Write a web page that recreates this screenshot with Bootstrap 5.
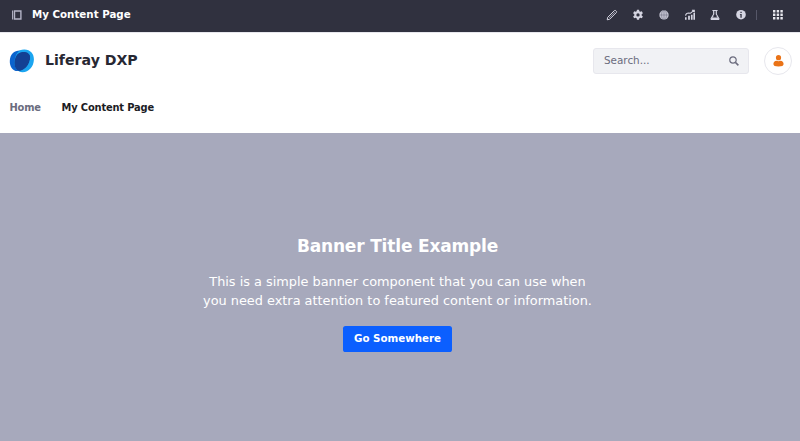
<!DOCTYPE html>
<html lang="en">
<head>
<meta charset="utf-8">
<meta name="viewport" content="width=device-width, initial-scale=1">
<title>My Content Page - Liferay DXP</title>
<link href="https://cdn.jsdelivr.net/npm/bootstrap@5.3.0/dist/css/bootstrap.min.css" rel="stylesheet">
<style>
body{font-family:"DejaVu Sans",sans-serif;font-size:10.29px;color:#272833;height:441px;overflow:hidden}
svg{display:block;flex:none}
.control-bar{height:32px;background:#30313f;color:#d5d5e2;padding:0 17px 3px 12px}
.control-title{font-size:10.29px;color:#fff;margin-left:10px}
.tools{gap:13.7px}
.divider{width:1px;height:10px;background:#565768;margin:0 2px 0 -4.3px}
.site-header{height:57px;padding:0 8px 1px 9px;border-top:1px solid #e7e7ed}
.brand-name{font-size:14.14px;color:#272833;margin-left:11px;padding-top:1px}
.search-box{width:156px;height:26px;background:#f1f2f5;border:1px solid #e7e7ed;border-radius:3px;padding:0 9px 0 10px;color:#6b6c7e;margin-right:15px}
.search-box input{font-size:10.4px;color:#6b6c7e;min-width:0}
.search-box input::placeholder{color:#6b6c7e;opacity:1}
.avatar{width:28px;height:28px;border:1px solid #e7e7ed}
.site-nav{height:44px;padding:11px 9.5px 0;gap:20.7px;font-size:9.9px;letter-spacing:-.16px;line-height:15px}
.site-nav a{color:#6b6c7e;text-decoration:none}
.site-nav a.active{color:#1c1c24}
.banner{background:#a7a9bc;height:308px;padding-top:102px;padding-right:5px;color:#fff}
.banner h1{font-size:17px;letter-spacing:-.17px;line-height:22px;margin:0 0 15px}
.banner p{font-size:12.86px;line-height:19.29px;width:400px;margin:0 0 15.5px}
.btn-go{background:#0b5fff;color:#fff;font-size:10.29px;line-height:15px;padding:5px 10.5px 6px;border:0;border-radius:2.6px}
</style>
<script src="https://cdn.jsdelivr.net/npm/bootstrap@5.3.0/dist/js/bootstrap.bundle.min.js"></script>
</head>
<body class="bg-white">
<div class="control-bar d-flex align-items-center">
  <svg width="10" height="10" viewBox="0 0 10 10" fill="none" stroke="#b4b4c6"><path d="M.6 .5v9" stroke-width="1.1"/><path d="M2.5 1h6.400v8H2.500z" stroke-width="1.400"/></svg>
  <span class="control-title fw-bold">My Content Page</span>
  <div class="tools d-flex align-items-center ms-auto">
    <svg width="12" height="12" viewBox="0 0 12 12" fill="none" stroke="#d5d5e2" stroke-linejoin="round"><path d="M1.700 8.300 8.400 1.600q.7-.5 1.400.1l.5.5q.6.7 0 1.400L3.600 10.300l-2.400.5z"/><path d="m3.100 8.900 5.700-5.700" stroke-width=".6"/></svg>
    <svg width="12" height="12" viewBox="0 0 16 16" fill="#d5d5e2"><path fill-rule="evenodd" d="M6.600 1h2.800l.4 2 1.300.7 2-.7 1.400 2.500-1.600 1.400v1.600l1.600 1.400-1.400 2.500-2-.7-1.300.7-.4 2H6.600l-.4-2-1.300-.7-2 .7-1.400-2.500 1.600-1.400V6.900L1.500 5.500l1.400-2.500 2 .7L6.200 3zM8 5.700a2.200 2.200 0 1 0 0 4.400 2.200 2.200 0 0 0 0-4.400z"/></svg>
    <svg width="12" height="12" viewBox="0 0 12 12"><circle cx="6" cy="6" r="4.700" fill="#c4c4d2"/><g fill="none" stroke="#666778" stroke-width=".5"><path d="M6 1.400v9.200M1.400 6h9.200"/><ellipse cx="6" cy="6" rx="2.400" ry="4.600"/></g></svg>
    <svg width="12" height="12" viewBox="0 0 12 12" fill="#d5d5e2"><path d="M1 8.200h1.600v2.500H1zM4.100 6.700h1.800v4H4.100zM6.900 5.700h1.700v5H6.900zM9.400 4H11v6.700H9.400z"/><path d="M1.500 6.700Q2 4 4.700 4l1.800.2L10 1.300M7.900 1.200h2.400v2.300" fill="none" stroke="#d5d5e2" stroke-width="1.100"/></svg>
    <svg width="12" height="12" viewBox="0 0 12 12"><path d="M3.400 1.500h5.200M4.700 1.500v3.700L2.200 9.400q-.4 1 .6 1h6.400q1 0 .6-1L7.300 5.200V1.500" fill="none" stroke="#d5d5e2" stroke-width="1.200"/><path d="M4.200 7h3.600l1.700 3H2.500z" fill="#d5d5e2"/><path d="M4.800 6.600h2.400l1 2H3.800z" fill="#30313f"/></svg>
    <svg width="12" height="12" viewBox="0 0 12 12"><circle cx="6" cy="5.700" r="4.800" fill="#d5d5e2"/><path d="M5.400 2.700h1.300v1.200H5.400zM4.900 4.900h1.800v3.800H5.400v-3h-.5z" fill="#30313f"/></svg>
    <span class="divider"></span>
    <svg width="10" height="10" viewBox="0 0 10 10" fill="#e7e7ed"><path d="M0 0h2.400v2.400H0zM3.700 0h2.400v2.400H3.700zM7.400 0h2.400v2.400H7.400zM0 3.500h2.400v2.400H0zM3.700 3.500h2.400v2.400H3.700zM7.400 3.500h2.400v2.400H7.400zM0 7h2.400v2.400H0zM3.700 7h2.400v2.400H3.700zM7.400 7h2.400v2.400H7.400z"/></svg>
  </div>
</div>
<header class="site-header d-flex align-items-center">
  <svg width="25" height="24" viewBox="0 0 25 24"><defs><clipPath id="leaf"><path d="M.8 12C1 5.500 5 1.500 11 1.500c6.500 0 10.200 1.800 10.200 6.700 0 6-4.200 13.300-12.200 13.900C3.500 22.400.6 17.500.8 12z"/></clipPath></defs><path d="M.8 12C1 5.500 5 1.500 11 1.500c6.500 0 10.200 1.800 10.200 6.700 0 6-4.200 13.300-12.200 13.900C3.500 22.400.6 17.500.8 12z" fill="#0b63ce"/><path d="M15.500.5c6 .2 9.700 4.400 9.400 10.300-.3 7-5 12.400-11.300 12.400C8.500 23.200 5.300 19 5.500 13.600 5.800 6.500 8.500.3 15.500.5z" fill="#1ba5f0"/><path d="M12 3.200c5.500-1 9.200 1.200 9.200 5 0 6-4.200 13.300-11.200 13.900C7 21 5.300 18 5.500 13.600 5.700 9.500 7 4.500 12 3.200z" fill="#134194" clip-path="url(#leaf)"/></svg>
  <span class="brand-name fw-bold">Liferay DXP</span>
  <div class="search-box d-flex align-items-center ms-auto">
    <input class="border-0 bg-transparent p-0 flex-grow-1" type="text" placeholder="Search..." aria-label="Search">
    <svg width="10" height="10" viewBox="0 0 10 10" fill="none" stroke="#6b6c7e"><circle cx="4" cy="4" r="3.200" stroke-width="1.200"/><path d="m6.400 6.400 3 3" stroke-width="1.500"/></svg>
  </div>
  <div class="avatar rounded-circle d-flex align-items-center justify-content-center">
    <svg width="11" height="12" viewBox="0 0 11 12" fill="#ea7317"><circle cx="5.500" cy="2.700" r="2.600"/><path d="M.4 9C.4 7 1.700 6 3.500 5.700q2 .9 4 0c1.800.3 3.100 1.300 3.100 3.300 0 1.700-1.600 2.500-5.100 2.500S.4 10.700.4 9z"/></svg>
  </div>
</header>
<nav class="site-nav d-flex fw-bold"><a href="#">Home</a><a href="#" class="active">My Content Page</a></nav>
<main class="banner d-flex flex-column align-items-center text-center">
  <h1 class="fw-bold">Banner Title Example</h1>
  <p>This is a simple banner component that you can use when you need extra attention to featured content or information.</p>
  <a class="btn btn-go fw-bold" href="#">Go Somewhere</a>
</main>
</body>
</html>
